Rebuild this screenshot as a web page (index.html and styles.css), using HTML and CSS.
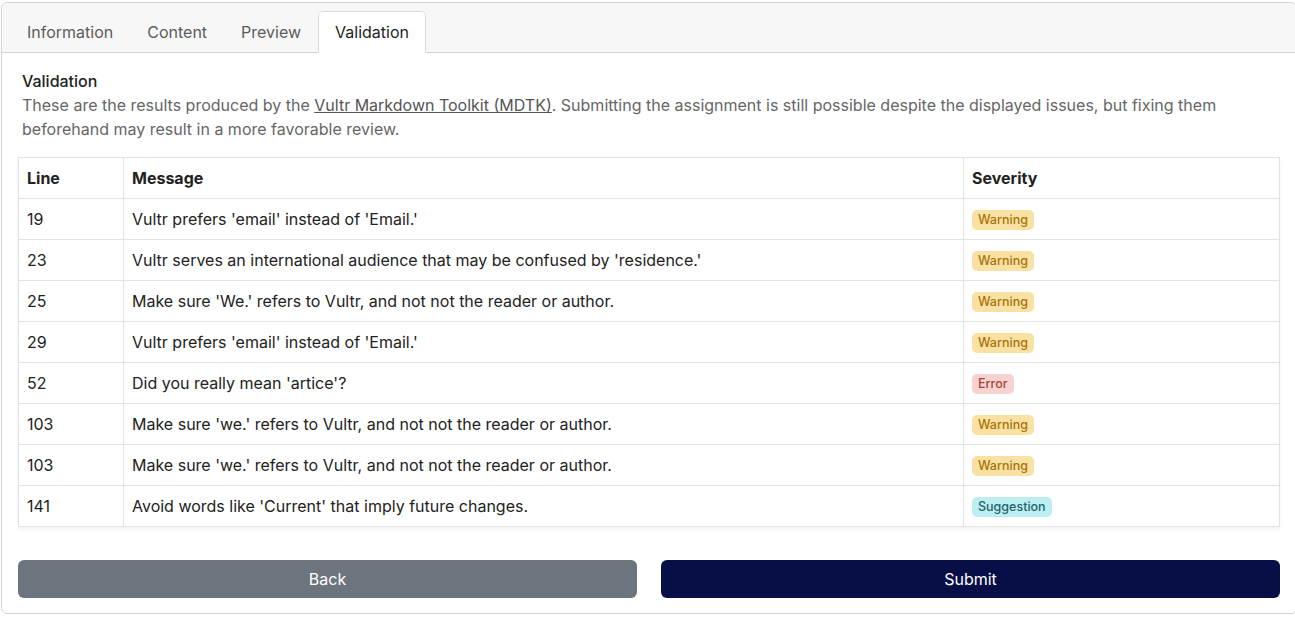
FILE: index.html
```html
<!DOCTYPE html>
<html lang="en">
  <head>
    <meta charset="UTF-8" />
    <meta name="viewport" content="width=device-width, initial-scale=1.0" />
    <title>Assignment Validation</title>
    <link rel="stylesheet" href="styles.css">
  </head>
  <body>
    <div class="card">
      <div class="card-header">
        <ul class="tabs">
          <li class="tab">Information</li>
          <li class="tab">Content</li>
          <li class="tab">Preview</li>
          <li class="tab active">Validation</li>
        </ul>
      </div>

      <div class="card-body">
        <div class="intro">
          <h2>Validation</h2>
          <p>
            These are the results produced by the <a href="#">Vultr Markdown Toolkit (MDTK)</a>. Submitting the assignment is still possible despite the displayed issues, but fixing them beforehand may result in a more favorable review.
          </p>
        </div>

        <table class="results">
          <thead>
            <tr>
              <th class="col-line">Line</th>
              <th>Message</th>
              <th class="col-severity">Severity</th>
            </tr>
          </thead>
          <tbody>
            <tr>
              <td>19</td>
              <td>Vultr prefers 'email' instead of 'Email.'</td>
              <td><span class="badge warning">Warning</span></td>
            </tr>
            <tr>
              <td>23</td>
              <td>Vultr serves an international audience that may be confused by 'residence.'</td>
              <td><span class="badge warning">Warning</span></td>
            </tr>
            <tr>
              <td>25</td>
              <td>Make sure 'We.' refers to Vultr, and not not the reader or author.</td>
              <td><span class="badge warning">Warning</span></td>
            </tr>
            <tr>
              <td>29</td>
              <td>Vultr prefers 'email' instead of 'Email.'</td>
              <td><span class="badge warning">Warning</span></td>
            </tr>
            <tr>
              <td>52</td>
              <td>Did you really mean 'artice'?</td>
              <td><span class="badge error">Error</span></td>
            </tr>
            <tr>
              <td>103</td>
              <td>Make sure 'we.' refers to Vultr, and not not the reader or author.</td>
              <td><span class="badge warning">Warning</span></td>
            </tr>
            <tr>
              <td>103</td>
              <td>Make sure 'we.' refers to Vultr, and not not the reader or author.</td>
              <td><span class="badge warning">Warning</span></td>
            </tr>
            <tr>
              <td>141</td>
              <td>Avoid words like 'Current' that imply future changes.</td>
              <td><span class="badge suggestion">Suggestion</span></td>
            </tr>
          </tbody>
        </table>

        <div class="actions">
          <button class="btn grey">Back</button>
          <button class="btn navy">Submit</button>
        </div>
      </div>
    </div>
  </body>
</html>
```

FILE: styles.css
```css
* {
  margin: 0;
  padding: 0;
  box-sizing: border-box;
}
body {
  font-family: Inter, "Liberation Sans", sans-serif;
  background-color: #fff;
  color: #212529;
  overflow: hidden;
}
.card {
  width: 1296px;
  margin: 2px 0 0 1px;
  border: 1px solid #d4d4d4;
  border-radius: 6px;
  background: #fff;
}
.card-header {
  background-color: #f7f7f7;
  border-bottom: 1px solid #d4d4d4;
  border-radius: 6px 6px 0 0;
  padding: 8px 8px 0;
}
.tabs {
  list-style: none;
  display: flex;
  margin-bottom: -1px;
}
.tab {
  font-size: 16px;
  line-height: 24px;
  padding: 8px 16px;
  color: #5c5c5c;
  border: 1px solid transparent;
  border-radius: 5px 5px 0 0;
}
.tab.active {
  background: #fff;
  color: #1e1e1e;
  border-color: #dcdcdc #dcdcdc #fff;
}
.card-body {
  padding: 16px 16px 15px;
}
.intro {
  padding: 0 4px;
  margin-bottom: 16px;
}
.intro h2 {
  font-size: 16px;
  font-weight: 500;
  line-height: 24px;
  color: #222;
}
.intro p {
  font-size: 16px;
  line-height: 24px;
  color: #666;
}
.intro a {
  color: #555;
  text-decoration: underline;
}
.results {
  width: 100%;
  border-collapse: collapse;
  font-size: 16px;
  color: #222;
  box-shadow: 0px 2px 4px 0px #00000010;
}
.results th,
.results td {
  border: 1px solid #e2e2e2;
  height: 41px;
  padding: 0 8px;
  text-align: left;
  vertical-align: middle;
}
.results th {
  font-weight: 700;
}
.col-line {
  width: 105px;
}
.col-severity {
  width: 316px;
}
.badge {
  display: inline-block;
  font-size: 12.5px;
  font-weight: 500;
  line-height: 20px;
  padding: 0 6px;
  border-radius: 5px;
}
.warning {
  background-color: #f8e1a2;
  color: #a8730a;
}
.error {
  background-color: #f8d2ce;
  color: #a8443b;
}
.suggestion {
  background-color: #bdeef1;
  color: #1d6568;
}
.actions {
  display: grid;
  grid-template-columns: 1fr 1fr;
  gap: 24px;
  margin-top: 33px;
}
.btn {
  font-family: Inter, "Liberation Sans", sans-serif;
  font-size: 16px;
  font-weight: 400;
  height: 38px;
  border: none;
  border-radius: 6px;
  color: #fff;
  cursor: pointer;
}
.grey {
  background-color: #6c757d;
}
.navy {
  background-color: #080f47;
}
```
